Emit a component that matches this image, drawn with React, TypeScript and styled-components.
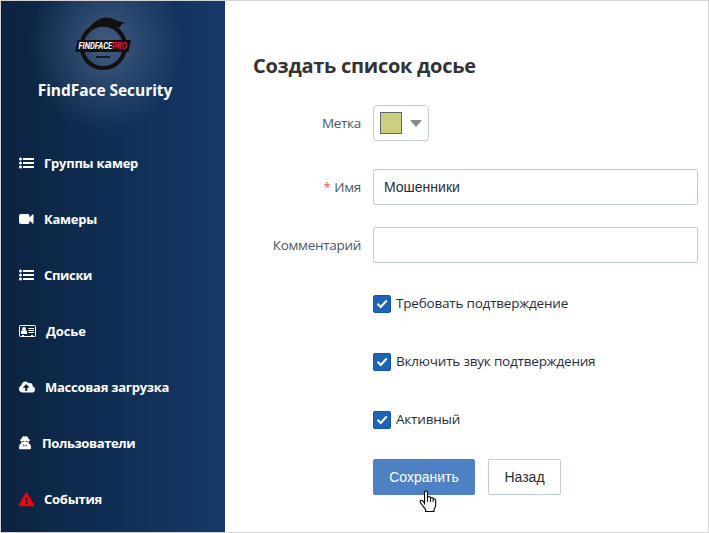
import React from "react";
import styled, { createGlobalStyle } from "styled-components";
import { FaCloudUploadAlt, FaExclamationTriangle } from "react-icons/fa";

const GlobalStyle = createGlobalStyle`
  * { box-sizing: border-box; }
  body { margin: 0; background: #fff; overflow: hidden; }
`;

const Window = styled.div`
  display: flex;
  width: 709px;
  height: 533px;
  border: 1px solid #d4d4d4;
  background: #fff;
  font-family: "Open Sans", "Noto Sans", sans-serif;
  font-size: 13.5px;
  color: #1f2d3d;
`;

const Sidebar = styled.aside`
  width: 224px;
  height: 531px;
  flex: none;
  color: #fff;
  background:
    radial-gradient(ellipse 76px 88px at 105px 44px, rgba(118, 135, 166, 0.52), rgba(100, 125, 165, 0.3) 45%, rgba(80, 110, 160, 0) 100%),
    linear-gradient(90deg, #0c2340 0%, #102e54 50%, #163969 100%);
`;

const Brand = styled.div`
  display: flex;
  flex-direction: column;
  align-items: center;
  width: 208px;
  height: 134px;
  padding-top: 14px;
  > svg { margin-left: -4px; }
`;

const BrandName = styled.div`
  margin-top: 7px;
  font-size: 15.5px;
  line-height: 20px;
  font-weight: 700;
  white-space: nowrap;
`;

const Nav = styled.nav`
  display: flex;
  flex-direction: column;
`;

const NavItem = styled.a<{ $gap: number; $danger?: boolean }>`
  display: flex;
  align-items: center;
  gap: ${(p) => p.$gap}px;
  height: 56px;
  padding-left: 18px;
  font-size: 13px;
  font-weight: 700;
  white-space: nowrap;
  svg { flex: none; color: ${(p) => (p.$danger ? "#ff0000" : "#fff")}; }
`;

const Spaced = styled.span<{ $ls?: number }>`
  letter-spacing: ${(p) => p.$ls ?? 0}px;
  white-space: nowrap;
`;

const Main = styled.main`
  flex: 1;
  padding: 50px 10px 0 28px;
`;

const Title = styled.h1`
  margin: 0;
  height: 30px;
  font-size: 20px;
  line-height: 30px;
  font-weight: 700;
  color: #333;
  white-space: nowrap;
`;

const Form = styled.form`
  display: flex;
  flex-direction: column;
  padding-top: 24px;
`;

const Row = styled.div<{ $mb: number }>`
  display: grid;
  grid-template-columns: 108px 325px;
  column-gap: 12px;
  align-items: center;
  height: 36px;
  margin-bottom: ${(p) => p.$mb}px;
`;

const Label = styled.label`
  padding-bottom: 1px;
  text-align: right;
  color: #48576a;
  white-space: nowrap;
`;

const Star = styled.span`
  color: #ff4949;
  font-size: 12px;
  margin-right: 4px;
`;

const ColorPicker = styled.div`
  display: flex;
  align-items: center;
  gap: 8px;
  width: 56px;
  height: 36px;
  padding-left: 6px;
  border: 1px solid #bfcbd9;
  border-radius: 4px;
`;

const Swatch = styled.div`
  width: 22px;
  height: 22px;
  background: #cdcf80;
  border: 1px solid #666;
`;

const Input = styled.input`
  width: 325px;
  height: 36px;
  padding: 0 10px;
  border: 1px solid #bfcbd9;
  border-radius: 2px;
  outline: none;
  font: 14px "Liberation Sans", sans-serif;
  color: #1f2d3d;
`;

const CheckRow = styled.label`
  display: flex;
  align-items: center;
  gap: 5px;
  height: 18px;
  margin: 0 0 40px 120px;
  > span:last-child { padding-bottom: 2px; }
`;

const Box = styled.span`
  display: flex;
  width: 18px;
  height: 18px;
  background: #2062b4;
  border: 1px solid #0b57b5;
  border-radius: 2px;
`;

const Actions = styled.div`
  display: flex;
  gap: 13px;
  margin: -10px 0 0 120px;
`;

const Button = styled.button<{ $primary?: boolean }>`
  position: relative;
  width: ${(p) => (p.$primary ? 102 : 73)}px;
  height: 36px;
  padding: 0;
  border: 1px solid ${(p) => (p.$primary ? "#4d81c3" : "#bfcbd9")};
  border-radius: 2px;
  background: ${(p) => (p.$primary ? "#4d81c3" : "#fff")};
  color: ${(p) => (p.$primary ? "#fff" : "#1f2d3d")};
  font: 14px "Liberation Sans", sans-serif;
`;

const Pointer = styled.svg`
  position: absolute;
  left: 45px;
  top: 30px;
`;

const LogoText = styled.text`
  font: italic 700 8.5px "Roboto", sans-serif;
`;

const Logo = () => (
  <svg width="58" height="58" viewBox="0 0 58 58">
    <circle cx="29.300" cy="31.300" r="21.700" fill="none" stroke="#111" strokeWidth="4.200" />
    <path d="M10 21C16 9 25 2.500 32 2.500C39 2.500 43 7 51 7.300C48 8.500 47 10.500 45 13C37 9 22 7 10 21Z" fill="#111" />
    <path d="M3.500 25H57L54.500 37H1Z" fill="#111" />
    <path d="M22 42H36" stroke="#111" strokeWidth="1.700" />
    <LogoText x="4.500" y="34" textLength="48.500" lengthAdjust="spacingAndGlyphs" fill="#fff">
      FINDFACE<tspan fill="#ef1741">PRO</tspan>
    </LogoText>
  </svg>
);

const ListIcon = () => (
  <svg width="15" height="12" viewBox="0 0 15 12">
    <path d="M4 1H15V3H4ZM4 5H15V7H4ZM4 9H15V11H4Z" fill="currentColor" />
    <circle cx="1.500" cy="2" r="1.500" fill="currentColor" />
    <circle cx="1.500" cy="6" r="1.500" fill="currentColor" />
    <circle cx="1.500" cy="10" r="1.500" fill="currentColor" />
  </svg>
);

const CameraIcon = () => (
  <svg width="15" height="10" viewBox="0 0 15 10">
    <path d="M2 0H8.500Q10.500 0 10.500 2V3.500L13.800 0.300Q14.500 0 14.500 0.800V9.200Q14.500 10 13.800 9.700L10.500 6.500V8Q10.500 10 8.500 10H2Q0 10 0 8V2Q0 0 2 0Z" fill="currentColor" />
  </svg>
);

const AgentIcon = () => (
  <svg width="13" height="14" viewBox="0 0 13 14">
    <path d="M3.300 0.800Q4.500 0 6 0.600Q7.500 0 8.700 0.800L9.500 3L11 3.700V4.600L9.800 5.200L9.500 7.200L11.300 8.500Q12 10 12 12Q12 13.300 10.800 13.300H1.200Q0 13.300 0 12Q0 10 0.700 8.500L2.500 7.200L2.200 5.200L1 4.600V3.700L2.500 3Z" fill="currentColor" />
    <path d="M3 5H5.300V5.700H3ZM6.700 5H9V5.700H6.700ZM4.200 8.200L5.500 9L4.900 11.500ZM7.800 8.200L6.500 9L7.100 11.500Z" fill="#0d294b" />
  </svg>
);

const CardIcon = () => (
  <svg width="17" height="12" viewBox="0 0 17 12">
    <rect x="0.500" y="0.500" width="16" height="11" rx="0.800" fill="none" stroke="currentColor" />
    <circle cx="5" cy="4" r="1.900" fill="currentColor" />
    <path d="M2 9V7Q2 5.300 3.500 5.300H6.500Q8 5.300 8 7V9ZM3 10H5V12H3ZM12 10H14V12H12Z" fill="currentColor" />
    <path d="M9.500 3.500H15M9.500 5.500H15M9.500 7.500H15" stroke="currentColor" />
  </svg>
);

const items = [
  { text: "Группы камер", icon: <ListIcon />, gap: 10, ls: -0.25 },
  { text: "Камеры", icon: <CameraIcon />, gap: 10, ls: -0.25 },
  { text: "Списки", icon: <ListIcon />, gap: 10, ls: -0.35 },
  { text: "Досье", icon: <CardIcon />, gap: 10, ls: -0.1 },
  { text: "Массовая загрузка", icon: <FaCloudUploadAlt size={16} />, gap: 10, ls: -0.27 },
  { text: "Пользователи", icon: <AgentIcon />, gap: 10, ls: -0.4 },
  { text: "События", icon: <FaExclamationTriangle size={15} />, gap: 10, ls: -0.25, danger: true },
];

const checks = [
  { text: "Требовать подтверждение", ls: -0.2 },
  { text: "Включить звук подтверждения", ls: -0.2 },
  { text: "Активный", ls: -0.2 },
];

export default function App() {
  return (
    <>
      <GlobalStyle />
      <Window>
        <Sidebar>
          <Brand>
            <Logo />
            <BrandName><Spaced $ls={-0.05}>FindFace Security</Spaced></BrandName>
          </Brand>
          <Nav>
            {items.map((it) => (
              <NavItem key={it.text} $gap={it.gap} $danger={it.danger}>
                {it.icon}
                <Spaced $ls={it.ls}>{it.text}</Spaced>
              </NavItem>
            ))}
          </Nav>
        </Sidebar>
        <Main>
          <Title><Spaced $ls={-0.27}>Создать список досье</Spaced></Title>
          <Form>
            <Row $mb={28}>
              <Label><Spaced $ls={-0.3}>Метка</Spaced></Label>
              <ColorPicker>
                <Swatch />
                <svg width="12" height="7" viewBox="0 0 12 7"><path d="M0 0H12L6 7Z" fill="#888" /></svg>
              </ColorPicker>
            </Row>
            <Row $mb={22}>
              <Label><Star>*</Star><Spaced $ls={-0.3}>Имя</Spaced></Label>
              <Input defaultValue="Мошенники" />
            </Row>
            <Row $mb={32}>
              <Label><Spaced $ls={-0.3}>Комментарий</Spaced></Label>
              <Input />
            </Row>
            {checks.map((c) => (
              <CheckRow key={c.text}>
                <Box>
                  <svg width="16" height="16" viewBox="0 0 16 16"><path d="M3.500 7.800L6.700 11L12.700 4.500" fill="none" stroke="#fff" strokeWidth="2" /></svg>
                </Box>
                <Spaced $ls={c.ls}>{c.text}</Spaced>
              </CheckRow>
            ))}
            <Actions>
              <Button type="button" $primary>
                Сохранить
                <Pointer width="18" height="23" viewBox="0 0 18 23">
                  <path d="M5.500 14.500V2.500Q5.500 1 7 1T8.500 2.500V8Q8.500 6.500 10 6.500T11.500 8V8.500Q11.500 7.500 12.800 7.500T14.200 9V9.500Q14.300 8.700 15.300 8.700T16.700 10.500V15Q16.700 17 15 19.500V21.500H6.500V19.500L2 13.500Q0.700 11.700 1.500 10.700T4 11.200L5.500 13Z" fill="#f6f6f6" stroke="#000" strokeWidth="1.100" />
                  <path d="M8.500 7V12M11.500 8V12M14.200 9V12" stroke="#000" strokeWidth="0.900" />
                </Pointer>
              </Button>
              <Button type="button">Назад</Button>
            </Actions>
          </Form>
        </Main>
      </Window>
    </>
  );
}
